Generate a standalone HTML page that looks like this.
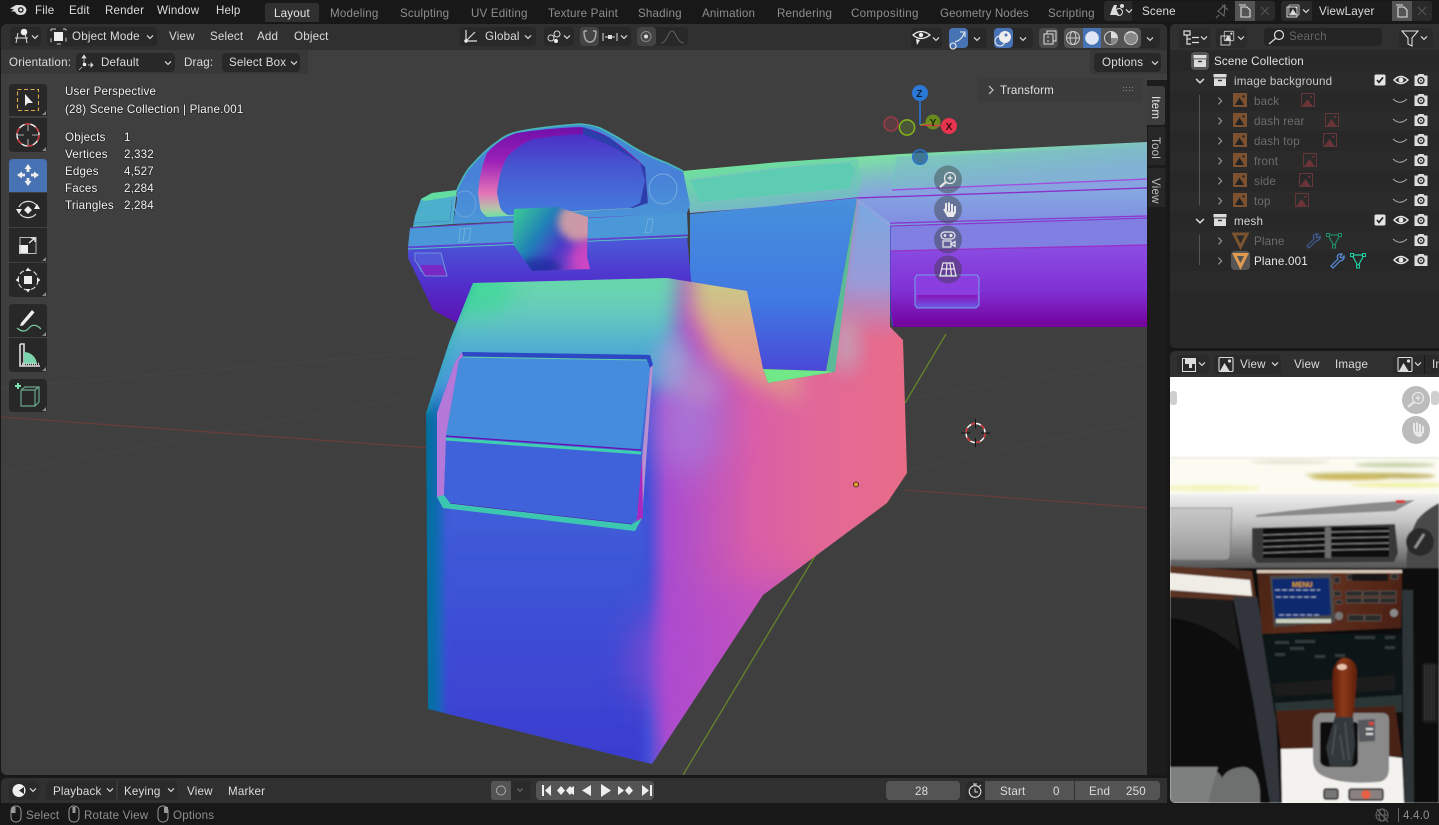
<!DOCTYPE html>
<html lang="en"><head><meta charset="utf-8"><title>Blender</title>
<style>
html,body{margin:0;padding:0;background:#181818;overflow:hidden}
svg{display:block;width:1439px;height:825px}
text{font-family:"Liberation Sans",sans-serif;font-size:11.6px;fill:#dcdcdc;letter-spacing:.18px;white-space:pre}
.tab{fill:#8e8e8e}
.s{fill:#f2f2f2;stroke:#1a1a1a;stroke-opacity:.55;stroke-width:1.6px;paint-order:stroke}
.dim{fill:#6d6d6d}
.st{fill:#8f8f8f}
.b{fill:#2a2a2a}
</style></head><body>
<svg viewBox="0 0 1439 825" width="1439" height="825">
<defs>
<clipPath id="vp"><rect x="1" y="24" width="1166" height="751" rx="6"/></clipPath>
<clipPath id="vm"><rect x="0" y="24" width="1147" height="751"/></clipPath>
<clipPath id="con"><path d="M473 283L667 278 747 291 763 369 768 383 835 372 857 198 890 222 890 327 903 340 907 473 887 503 763 595 652 764 428 709 426 413 450 340Z"/></clipPath>
<clipPath id="cub"><path d="M514 209L558 207 588 217 587 257 590 269 532 271 513 244Z"/></clipPath>
<clipPath id="img"><path d="M1170 377H1439V803H1176Q1170 803 1170 797Z"/></clipPath>
<filter id="b4" x="-40%" y="-40%" width="180%" height="180%"><feGaussianBlur stdDeviation="4"/></filter>
<filter id="b10" x="-50%" y="-50%" width="200%" height="200%"><feGaussianBlur stdDeviation="10"/></filter>
<filter id="b18" x="-80%" y="-80%" width="260%" height="260%"><feGaussianBlur stdDeviation="18"/></filter>
<filter id="p" x="-10%" y="-10%" width="120%" height="120%"><feGaussianBlur stdDeviation=".9"/></filter>
<filter id="p3" x="-30%" y="-30%" width="160%" height="160%"><feGaussianBlur stdDeviation="1.500"/></filter>

<linearGradient id="cbase" gradientUnits="userSpaceOnUse" x1="426" y1="0" x2="907" y2="0">
<stop offset="0" stop-color="#00709c"/><stop offset=".03" stop-color="#1668b8"/><stop offset=".055" stop-color="#3a52d6"/><stop offset=".46" stop-color="#4250d8"/><stop offset=".5" stop-color="#a84cd0"/><stop offset=".68" stop-color="#d85ea8"/><stop offset=".82" stop-color="#e26898"/><stop offset="1" stop-color="#e86c88"/></linearGradient>
<linearGradient id="cbot" gradientUnits="userSpaceOnUse" x1="0" y1="520" x2="0" y2="764"><stop offset="0" stop-color="#3f5cd8"/><stop offset="1" stop-color="#3a3cd0"/></linearGradient>
<linearGradient id="cup" gradientUnits="userSpaceOnUse" x1="0" y1="282" x2="0" y2="420"><stop offset="0" stop-color="#68d8aa"/><stop offset=".25" stop-color="#66c8c0"/><stop offset=".5" stop-color="#4cabd2"/><stop offset="1" stop-color="#4282dc"/></linearGradient>
<linearGradient id="cupr" gradientUnits="userSpaceOnUse" x1="0" y1="280" x2="0" y2="400"><stop offset="0" stop-color="#c8cc88"/><stop offset=".45" stop-color="#e0a488"/><stop offset="1" stop-color="#e08a90"/></linearGradient>
<linearGradient id="band" gradientUnits="userSpaceOnUse" x1="905" y1="148" x2="910" y2="192"><stop offset="0" stop-color="#7ce89a"/><stop offset=".55" stop-color="#7fc0c4"/><stop offset="1" stop-color="#88a4e0"/></linearGradient>
<linearGradient id="band2" gradientUnits="userSpaceOnUse" x1="1000" y1="190" x2="1000" y2="250"><stop offset="0" stop-color="#84a8e0"/><stop offset="1" stop-color="#8078e4"/></linearGradient>
<linearGradient id="lower" gradientUnits="userSpaceOnUse" x1="0" y1="248" x2="0" y2="327"><stop offset="0" stop-color="#8a4ce2"/><stop offset=".55" stop-color="#8030d4"/><stop offset="1" stop-color="#74009a"/></linearGradient>
<linearGradient id="rec" gradientUnits="userSpaceOnUse" x1="0" y1="200" x2="0" y2="372"><stop offset="0" stop-color="#4690dc"/><stop offset=".6" stop-color="#4078e2"/><stop offset="1" stop-color="#4a48d6"/></linearGradient>
<linearGradient id="hood" gradientUnits="userSpaceOnUse" x1="0" y1="125" x2="0" y2="225"><stop offset="0" stop-color="#3f8ed4"/><stop offset=".5" stop-color="#4880d8"/><stop offset="1" stop-color="#4a98d8"/></linearGradient>
<linearGradient id="rim" gradientUnits="userSpaceOnUse" x1="0" y1="130" x2="0" y2="218"><stop offset="0" stop-color="#7410aa"/><stop offset=".35" stop-color="#9a20b8"/><stop offset=".72" stop-color="#e474b8"/><stop offset=".9" stop-color="#b0c8a8"/><stop offset="1" stop-color="#64e4a0"/></linearGradient>
<linearGradient id="inn" gradientUnits="userSpaceOnUse" x1="0" y1="135" x2="0" y2="210"><stop offset="0" stop-color="#4c30c6"/><stop offset=".45" stop-color="#4658d0"/><stop offset="1" stop-color="#4478dc"/></linearGradient>
<linearGradient id="low2" gradientUnits="userSpaceOnUse" x1="0" y1="240" x2="0" y2="325"><stop offset="0" stop-color="#4a58d8"/><stop offset=".5" stop-color="#5030cc"/><stop offset="1" stop-color="#5e10b0"/></linearGradient>
<linearGradient id="cube" gradientUnits="userSpaceOnUse" x1="514" y1="215" x2="588" y2="265"><stop offset="0" stop-color="#38c498"/><stop offset=".35" stop-color="#2080b8"/><stop offset=".62" stop-color="#4a3cc8"/><stop offset="1" stop-color="#c040c8"/></linearGradient>
<linearGradient id="tr" gradientUnits="userSpaceOnUse" x1="0" y1="205" x2="0" y2="335"><stop offset="0" stop-color="#7aa8e0"/><stop offset=".6" stop-color="#9a9ad8"/><stop offset="1" stop-color="#e26c92"/></linearGradient>
<linearGradient id="hand" gradientUnits="userSpaceOnUse" x1="0" y1="295" x2="0" y2="308"><stop offset="0" stop-color="#8a14b8"/><stop offset="1" stop-color="#6a5ae6"/></linearGradient>
<linearGradient id="gdash" gradientUnits="userSpaceOnUse" x1="0" y1="490" x2="0" y2="568"><stop offset="0" stop-color="#f6f6f6"/><stop offset=".4" stop-color="#c4c4c4"/><stop offset=".8" stop-color="#808080"/><stop offset="1" stop-color="#555"/></linearGradient>
<linearGradient id="wood" gradientUnits="userSpaceOnUse" x1="1260" y1="570" x2="1400" y2="630"><stop offset="0" stop-color="#4a2416"/><stop offset=".5" stop-color="#5e2e1c"/><stop offset="1" stop-color="#4a2014"/></linearGradient>
<linearGradient id="knob" gradientUnits="userSpaceOnUse" x1="1332" y1="0" x2="1358" y2="0"><stop offset="0" stop-color="#5a1c0a"/><stop offset=".45" stop-color="#8c3a18"/><stop offset="1" stop-color="#581c0c"/></linearGradient>

<path id="cd" d="M-3-1.6L0 1.4 3-1.6" fill="none" stroke="#d8d8d8" stroke-width="1.2"/>
<path id="cr" d="M-1.6-3.4L1.6 0-1.6 3.4" fill="none" stroke="#9a9a9a" stroke-width="1.1"/>
<g id="eye"><path d="M-7 0Q0-7 7 0Q0 7-7 0Z" fill="none" stroke="#e6e6e6" stroke-width="1.5"/><circle r="2.4" fill="#e6e6e6"/></g>
<path id="eyec" d="M-7-2Q0 4.5 7-2" fill="none" stroke="#a8a8a8" stroke-width="1"/>
<g id="cam"><path d="M-6.500-4.500H-3.500L-2.500-6H2.500L3.500-4.500H6.500V6H-6.500Z" fill="#dedede"/><circle cy=".5" r="3.700" fill="#333"/><circle cy=".5" r="2.200" fill="#dedede"/><circle cy=".5" r=".9" fill="#333"/></g>
<g id="chk"><rect x="-5.5" y="-5.5" width="11" height="11" rx="1.5" fill="#e4e4e4"/><path d="M-3 0L-1 2.4 3-2.6" fill="none" stroke="#222" stroke-width="1.7"/></g>
<g id="coll"><rect x="-6.5" y="-6" width="13" height="3.4" fill="#dcdcdc"/><path d="M-6-1.6H6V6H-6Z" fill="#dcdcdc"/><rect x="-2" y="-.2" width="4" height="1.4" fill="#333"/></g>
<g id="imgb"><rect x="-7" y="-7" width="14" height="14" fill="#7e5230"/><path d="M-5 5L-.5-2.5 4 5Z" fill="#222"/><circle cx="3.5" cy="-3.5" r="1.2" fill="#222"/></g>
<g id="imgr"><rect x="-6.5" y="-6.5" width="13" height="13" fill="none" stroke="#653638" stroke-width="1"/><path d="M-5.5 6L-.5-1 4.5 6Z" fill="#6c3438"/><circle cx="3.2" cy="-3.2" r="1.2" fill="#6c3438"/></g>
<g id="ic"><rect x="-7" y="-7" width="14" height="14" rx="1" fill="none" stroke="#dcdcdc" stroke-width="1.1"/><path d="M-6 6.5L-1.5-1.5 3.5 6.5Z" fill="#dcdcdc"/><circle cx="3.5" cy="-3.5" r="1.6" fill="#dcdcdc"/></g>
<g id="ms"><rect x="-5" y="-8" width="10" height="16" rx="4.5" fill="none" stroke="#9a9a9a" stroke-width="1"/></g>
</defs>

<rect width="1439" height="825" fill="#181818"/>

<!-- top bar -->
<g fill="#dedede"><path d="M10 8.500L16 5H20.500Q25 5 26.500 9.500Q26 15 20.500 15Q16 15 15 11.500L11 11.500 14 9.500Z"/></g><circle cx="20.800" cy="9.900" r="2.800" fill="#181818"/><circle cx="20.800" cy="9.900" r="1.500" fill="#dedede"/>
<text x="35" y="14">File</text><text x="69" y="14">Edit</text><text x="105" y="14">Render</text><text x="157" y="14">Window</text><text x="216" y="14">Help</text>
<path d="M265 22V6Q265 3 268 3H316Q319 3 319 6V22Z" fill="#303030"/>
<text x="274" y="17" style="fill:#e6e6e6">Layout</text>
<text class="tab" x="330" y="17">Modeling</text><text class="tab" x="400" y="17">Sculpting</text><text class="tab" x="471" y="17">UV Editing</text><text class="tab" x="548" y="17">Texture Paint</text><text class="tab" x="638" y="17">Shading</text><text class="tab" x="702" y="17">Animation</text><text class="tab" x="777" y="17">Rendering</text><text class="tab" x="851" y="17" style="letter-spacing:.3px">Compositing</text><text class="tab" x="940" y="17" style="letter-spacing:.08px">Geometry Nodes</text><text class="tab" x="1048" y="17">Scripting</text>

<rect x="1104" y="1" width="171" height="20" rx="3" fill="#2a2a2a"/>
<rect x="1132" y="1" width="103" height="20" fill="#1c1c1c"/><rect x="1235" y="1" width="20" height="20" fill="#545454"/>
<path d="M1114 5L1117 5 1116 9 1119 15H1110L1112 9Z" fill="#dcdcdc"/><circle cx="1119" cy="12" r="3.5" fill="none" stroke="#dcdcdc"/><circle cx="1122" cy="6" r="2" fill="#dcdcdc"/><use href="#cd" x="1129" y="11"/>
<text x="1142" y="15">Scene</text>
<path d="M1222 5L1228 10M1225 5L1218 11 1224 16ZM1219 15L1216 18" stroke="#707070" fill="none"/>
<path d="M1241 7H1247L1250 10V17H1241ZM1239 5H1246" fill="none" stroke="#e0e0e0" stroke-width="1.1"/>
<path d="M1261 7L1269 15M1269 7L1261 15" stroke="#555" stroke-width="1.1"/>
<rect x="1281" y="1" width="151" height="20" rx="3" fill="#2a2a2a"/>
<rect x="1312" y="1" width="80" height="20" fill="#1c1c1c"/><rect x="1392" y="1" width="20" height="20" fill="#545454"/>
<rect x="1287" y="7" width="10" height="10" fill="none" stroke="#dcdcdc"/><use href="#ic" transform="translate(1294 10) scale(.72)"/><use href="#cd" x="1306" y="11"/>
<text x="1319" y="15">ViewLayer</text>
<path d="M1398 7H1404L1407 10V17H1398ZM1396 5H1403" fill="none" stroke="#e0e0e0" stroke-width="1.1"/>
<path d="M1418 7L1426 15M1426 7L1418 15" stroke="#555" stroke-width="1.1"/>

<!-- VIEWPORT -->
<g clip-path="url(#vp)">
<rect x="1" y="24" width="1166" height="751" fill="#3f3f3f"/>
<g stroke="#444" stroke-width="1" fill="none">
<path d="M1 473L420 395M1 388L420 352M900 400L1147 360M905 470L1147 420"/>
</g>
<path d="M1 417L430 448M905 490L1147 508" stroke="#6e3c3c" stroke-width="1.1"/>
<path d="M683 775L815 556M905 403L946 334" stroke="#66852a" stroke-width="1.3"/>

<g clip-path="url(#vm)">
<!-- right dash -->
<path d="M683 171L780 162 900 154 1147 142V192L857 200 690 213Z" fill="url(#band)"/>
<path d="M690 180L780 168 850 163 856 170 850 188 700 202Z" fill="#5cc8bc"/>
<path d="M690 180L780 168 857 161 850 189 696 204" fill="none" stroke="#90b8d0" stroke-width="1"/>
<path d="M683 172L780 162 857 157 862 180 857 200 690 212Z" fill="#60d0a8" opacity=".45"/>
<path d="M898 157Q894 170 893 190L1147 179V146Z" fill="#7cbcc8" opacity=".55"/>
<path d="M898 157Q894 170 893 190L1147 179" fill="none" stroke="#70c8c0" stroke-width="1"/>
<path d="M892 190L1147 179" stroke="#a050e0" stroke-width="1.4"/>
<path d="M857 199L1147 188V218L857 226Z" fill="url(#band2)"/>
<path d="M780 206L857 198 1147 188" fill="none" stroke="#8a30c8" stroke-width="1.4"/>
<path d="M860 224L1147 216" stroke="#8a38d0" stroke-width="1.3"/>
<path d="M860 226L1147 218" stroke="#6ac0c8" stroke-width="1"/>
<path d="M890 226L1147 218V246L890 252Z" fill="#8080e2"/>
<path d="M890 226L1147 218" stroke="#8a38d0" stroke-width="1.3"/>
<path d="M890 251L1147 245V327H893L891 310Z" fill="url(#lower)"/>
<path d="M890 251L1147 245" stroke="#9a30c8" stroke-width="1.3"/>
<path d="M890 226V310L893 326" fill="none" stroke="#3c48c8" stroke-width="1.2"/>
<!-- glovebox -->
<path d="M917 275H977L979 278V305L976 308H917L915 305V278Z" fill="#8a3ee0"/>
<path d="M917 295H977L979 305 976 308H917L915 305Z" fill="url(#hand)"/>
<path d="M917 275H977L979 278V305L976 308H917L915 305V278Z" fill="none" stroke="#78a0e8" stroke-width="1"/>
<!-- recess -->
<path d="M690 214L857 198 826 371 763 369 750 320 690 300Z" fill="url(#rec)"/>
<!-- left lower -->
<path d="M408 246L687 236 692 290 473 290 457 323 433 310 408 258Z" fill="url(#low2)"/>
<path d="M415 253H441L446 271 420 272Z" fill="#5058d8"/><path d="M420 265H442L447 276 425 276Z" fill="#7a28c4"/>
<path d="M415 253H441L447 276 425 276 415 260Z" fill="none" stroke="#7aa0dc" stroke-width=".8"/>
<!-- band left -->
<path d="M410 228L687 212 688 235 408 247Z" fill="#4a98d8"/>
<path d="M410 228L687 212" stroke="#7040c8" stroke-width="1"/>
<path d="M408 247L688 235" stroke="#6a40d0" stroke-width="1.2"/>
<path d="M408 249L688 237" stroke="#58c8c0" stroke-width=".9"/>
<path d="M460 229L471 228 469 241 459 242ZM465 229L463 241M648 219L653 219 651 232 645 233Z" fill="none" stroke="#79b2dc" stroke-width=".8"/>
<!-- hood -->
<path d="M457 190Q465 172 472 165Q485 150 497 142Q507 134 517 132Q540 127 580 124Q592 125 600 128Q618 137 633 147Q650 157 667 163L683 171 690 205 687 213 453 224 457 200Z" fill="url(#hood)"/>
<path d="M457 190Q465 172 472 165Q485 150 497 142Q507 134 517 132Q540 127 580 124Q592 125 600 128Q618 137 633 147Q650 157 667 163L683 171" fill="none" stroke="#48b8b8" stroke-width="1.6"/>
<path d="M421 199L432 193 457 190 456 198 453 224 413 227 415 216Z" fill="#4cb0cc"/>
<path d="M421 199L432 193 457 190 456 196 424 201Z" fill="#62dca0"/>
<path d="M413 223L450 221 452 200" fill="none" stroke="#4a88c8" stroke-width=".8"/>
<path d="M478 193Q480 170 487 153Q500 138 517 133Q550 128 580 127Q597 130 610 138Q630 152 645 167L648 203 633 208 507 216 487 217Q480 212 480 207Z" fill="url(#rim)"/>
<path d="M497 193Q499 172 507 157Q518 145 533 139Q560 135 583 134Q600 138 613 147Q628 155 640 163L645 180 640 203 630 208 508 215Q502 212 500 207Z" fill="url(#inn)"/>
<path d="M583 127L610 138 645 167 648 203 633 208 630 208 640 203 645 180 640 163 613 147 583 134Z" fill="#2c3eac"/>
<ellipse cx="465" cy="204" rx="11" ry="13" fill="none" stroke="#6aa4dc" stroke-width=".9"/>
<ellipse cx="663" cy="189" rx="14" ry="15" fill="none" stroke="#78aee0" stroke-width=".9"/>
<!-- cube -->
<path d="M514 209L558 207 588 217 587 257 590 269 532 271 513 244Z" fill="url(#cube)"/>
<g clip-path="url(#cub)"><ellipse cx="580" cy="222" rx="22" ry="20" fill="#e0a8a0" opacity=".85" filter="url(#b4)"/><ellipse cx="540" cy="268" rx="22" ry="10" fill="#1c2a9c" opacity=".75" filter="url(#b4)"/><ellipse cx="585" cy="258" rx="14" ry="16" fill="#d848c0" opacity=".7" filter="url(#b4)"/></g>
<!-- notch faces -->
<path d="M763 369L826 371 835 372 768 383Z" fill="#70e888"/>
<path d="M857 198L860 200 836 372 826 371Z" fill="#60d0a8" opacity=".85"/>
<!-- console -->
<g clip-path="url(#con)">
<rect x="420" y="190" width="500" height="580" fill="url(#cbase)"/>
<rect x="444" y="500" width="200" height="270" fill="url(#cbot)" filter="url(#b4)"/>
<ellipse cx="770" cy="660" rx="140" ry="80" fill="#b048d0" opacity=".55" filter="url(#b18)"/>
<ellipse cx="688" cy="420" rx="32" ry="55" fill="#a878d8" opacity=".85" filter="url(#b18)"/>
<path d="M400 240H682L672 385 400 405Z" fill="url(#cup)" filter="url(#b10)"/>
<ellipse cx="475" cy="292" rx="38" ry="24" fill="#30d890" opacity=".6" filter="url(#b10)"/>
<path d="M426 413L450 340 473 283 462 283 420 410Z" fill="#22b0a8" opacity=".7" filter="url(#b4)"/>
<path d="M690 235H800V405L760 388 715 360 692 310Z" fill="url(#cupr)" filter="url(#b10)"/>
<ellipse cx="674" cy="365" rx="18" ry="28" fill="#a0a4d6" opacity=".85" filter="url(#b10)"/>
<ellipse cx="700" cy="385" rx="18" ry="20" fill="#b890c8" opacity=".7" filter="url(#b10)"/>
<path d="M857 190H896V338H835Z" fill="url(#tr)" filter="url(#b4)"/>
<ellipse cx="846" cy="345" rx="12" ry="28" fill="#b8b0c0" opacity=".8" filter="url(#b10)"/>
<path d="M857 200L890 226" fill="none" stroke="#a0a0e8" stroke-width="1"/>
</g>
<!-- front panel -->
<path d="M462 352L650 355 653 365 642 518 635 531 443 508 437 497 437 413 455 362Z" fill="#4268d8"/>
<path d="M462 352L650 355 653 365 650 368 463 357Z" fill="#2c48c4"/>
<path d="M437 413L455 362 462 352 463 357 459 360 446 436 444 495 437 497Z" fill="#b478d8"/>
<path d="M653 365L642 518 637 517 650 368Z" fill="#b890d0"/>
<path d="M642 455L643 518 636 524 637 517Z" fill="#a828c0"/>
<path d="M437 497L443 508 635 531 642 518 632 524 450 503 444 495Z" fill="#3cc8b0"/>
<path d="M450 503L632 524" stroke="#5014a0" stroke-width="1.1"/>
<path d="M463 357L647 360 650 368 640 450 446 436 459 360Z" fill="#458ddc"/>
<path d="M463 357L647 360" stroke="#62d0a8" stroke-width="1"/>
<path d="M446 441L642 455 637 517 632 524 450 503 444 495Z" fill="#3f62da"/>
<path d="M446 436L641 450" stroke="#6a10b0" stroke-width="1.3"/>
<path d="M446 439L641 453" stroke="#40d0b0" stroke-width="3"/>
</g>
<!-- header strips -->
<rect x="1" y="24" width="1166" height="26" fill="#303030"/>
<path d="M1 50H308V70Q308 74 304 74H1Z" fill="#383838"/>
<path d="M1167 50H1090V70Q1090 74 1094 74H1167Z" fill="#383838"/>

<!-- N panel -->
<rect x="1147" y="80" width="20" height="695" fill="#1c1c1c"/>
<path d="M1147 86H1162Q1165 86 1165 89V122Q1165 125 1162 125H1147Z" fill="#3d3d3d"/>
<path d="M1148 127H1165V165H1148ZM1148 168H1165V207H1148Z" fill="#272727"/>
<text transform="translate(1152 96) rotate(90)" style="fill:#e8e8e8">Item</text>
<text transform="translate(1152 137) rotate(90)" style="fill:#c0c0c0">Tool</text>
<text transform="translate(1152 178) rotate(90)" style="fill:#c0c0c0">View</text>
<rect x="978" y="78" width="164" height="24" rx="4" fill="#3b3b3b"/>
<path d="M989 86L993 90 989 94" fill="none" stroke="#d0d0d0" stroke-width="1.1"/>
<text x="1000" y="94" style="fill:#e0e0e0">Transform</text>
<g fill="#888"><rect x="1123" y="87" width="1" height="1"/><rect x="1126" y="87" width="1" height="1"/><rect x="1129" y="87" width="1" height="1"/><rect x="1132" y="87" width="1" height="1"/><rect x="1123" y="90" width="1" height="1"/><rect x="1126" y="90" width="1" height="1"/><rect x="1129" y="90" width="1" height="1"/><rect x="1132" y="90" width="1" height="1"/></g>

<!-- 3D cursor / origin -->
<circle cx="975.5" cy="433" r="9.5" fill="none" stroke="#fff" stroke-width="1.4"/>
<circle cx="975.5" cy="433" r="9.5" fill="none" stroke="#d82a2a" stroke-width="1.4" stroke-dasharray="5 5"/>
<path d="M975.5 419V428M975.5 438V447M961 433H970M981 433H990" stroke="#111" stroke-width="1"/>
<circle cx="856" cy="484.5" r="2.5" fill="#f09a20" stroke="#222" stroke-width=".8"/>

<!-- nav gizmo -->
<circle cx="891" cy="124" r="7" fill="#7a3a42" fill-opacity=".45" stroke="#a83a48" stroke-width="1.3"/>
<circle cx="920" cy="157" r="7.4" fill="#2a5a8c" fill-opacity=".75" stroke="#2a76d4" stroke-width="1.3"/>
<circle cx="933" cy="122" r="7.5" fill="#6a8a20"/>
<path d="M920 93V125" stroke="#2a76d4" stroke-width="1.6"/>
<path d="M920 125L949 126" stroke="#d83a50" stroke-width="1.6"/>
<path d="M920 125L932 122" stroke="#7a9a20" stroke-width="1.4"/>
<circle cx="907" cy="127.5" r="7.6" fill="#5a7030" fill-opacity=".45" stroke="#8ab818" stroke-width="1.5"/>
<circle cx="949" cy="126" r="8" fill="#e8344e"/>
<circle cx="920" cy="93" r="8" fill="#2a78d8"/>
<text x="916.2" y="97" style="font-size:10px;font-weight:bold;fill:#0c2038;letter-spacing:0">Z</text>
<text x="945.6" y="130" style="font-size:10px;font-weight:bold;fill:#3a0a10;letter-spacing:0">X</text>
<text x="929.8" y="126" style="font-size:10px;font-weight:bold;fill:#1c2806;letter-spacing:0">Y</text>
<g fill="#3a3a3a" fill-opacity=".42"><circle cx="948" cy="179.5" r="14"/><circle cx="948" cy="209.5" r="14"/><circle cx="948" cy="239.5" r="14"/><circle cx="948" cy="269.5" r="14"/></g>
<g fill="none" stroke="#e8e8e8" stroke-width="1.2">
<circle cx="950" cy="178" r="5.5"/><path d="M946 182L940 187" stroke-width="2.2"/><path d="M947.5 178H952.5M950 175.5V180.5"/>
<path d="M952 204V212M949 202.5V211M946 203V211M955 206V213M944 209L948 216H953L955 212" stroke-width="2" /><path d="M945 211Q947 217 952 217Q955 216 955 212" fill="#e8e8e8" stroke="none"/>
<rect x="941" y="232" width="14" height="7" rx="3.5"/><circle cx="945" cy="235.500" r=".8" fill="#e8e8e8"/><circle cx="951" cy="235.500" r="1" fill="#e8e8e8"/><rect x="943" y="241" width="8" height="6"/><path d="M951 244L955 241.5V246.5Z"/>
<path d="M943 263H953L956 276H940ZM941.6 269H954.4M947 263L946 276M950 263L951.5 276"/>
</g>

<!-- toolbar -->
<g fill="#282828">
<path d="M13 84H43Q47 84 47 88V116H9V88Q9 84 13 84ZM9 118H47V148Q47 152 43 152H13Q9 152 9 148Z"/>
<path d="M13 159H43Q47 159 47 163V192H9V163Q9 159 13 159Z" fill="#4772b3"/>
<path d="M9 193H47V227H9ZM9 228H47V262H9ZM9 263H47V293Q47 297 43 297H13Q9 297 9 293Z"/>
<path d="M13 304H43Q47 304 47 308V337H9V308Q9 304 13 304ZM9 338H47V368Q47 372 43 372H13Q9 372 9 368Z"/>
<rect x="9" y="379" width="38" height="33" rx="4"/>
</g>
<rect x="17.5" y="89.5" width="21" height="21" fill="none" stroke="#e0a84a" stroke-width="1.1" stroke-dasharray="4 2.5"/>
<path d="M25 94V106L28 103 33 103Z" fill="#eee"/>
<circle cx="28" cy="135" r="11" fill="none" stroke="#eee" stroke-width="1.4"/><circle cx="28" cy="135" r="11" fill="none" stroke="#c83030" stroke-width="1.4" stroke-dasharray="6 6"/>
<path d="M28 125V131M28 139V145M18 135H24M32 135H38" stroke="#aaa" stroke-width="1.1"/>
<g fill="#eee"><path d="M28 164L31.5 169H24.5ZM28 186L24.5 181H31.5ZM17 175L22 171.5V178.5ZM39 175L34 171.5V178.5Z"/><path d="M26.6 169H29.4V172H26.6ZM26.6 178H29.4V181H26.6ZM22 173.6H25V176.4H22ZM31 173.6H34V176.4H31Z"/></g>
<path d="M19 207A10 9 0 0 1 37 206M36 214A10 9 0 0 1 20 214" fill="none" stroke="#ddd" stroke-width="1.2"/><path d="M24 210L28 206 32 210 28 214Z" fill="#eee"/><path d="M16 209H22L19 214ZM34 209H40L37 204Z" fill="#eee"/>
<rect x="19" y="245" width="9" height="9" fill="#eee"/><rect x="20" y="237.500" width="16" height="16" fill="none" stroke="#bbb"/><path d="M29 243L35 238M35 238H31M35 238V242" stroke="#eee" stroke-width="1.3" fill="none"/>
<circle cx="28" cy="280" r="10" fill="none" stroke="#ddd" stroke-width="1.1" stroke-dasharray="5 2.5"/><rect x="24" y="276" width="8" height="8" fill="#eee"/><path d="M28 267.500L25.500 271H30.500ZM28 292.500L25.500 289H30.500ZM15.500 280L19 277.500V282.500ZM40.500 280L37 277.500V282.500Z" fill="#eee"/>
<path d="M21 323L32 310 34.500 312.500 23 325.500 20 326Z" fill="#eee"/><path d="M17 328Q24 334 29 328T41 329" fill="none" stroke="#7bc8a0" stroke-width="1.3"/>
<path d="M20 344V366H40M20 344H24V366" fill="none" stroke="#ddd" stroke-width="1.6"/><path d="M24 352A13 13 0 0 1 37 364H24Z" fill="#7bd4ac"/><path d="M20 364H40" stroke="#ccc" stroke-width="2.4" stroke-dasharray="1 1"/>
<path d="M15 386H21M18 383V389" stroke="#7be0b0" stroke-width="2"/>
<path d="M21 390H35L39 387M21 390V406H35V390M35 406L39 402V387H25L21 390" fill="none" stroke="#6ca88c" stroke-width="1.2"/>
<g fill="#888"><path d="M46 115V111L42 115ZM46 151V147L42 151ZM46 261V257L42 261ZM46 296V292L42 296ZM46 336V332L42 336ZM46 371V367L42 371ZM46 411V407L42 411Z"/></g>

<!-- stats -->
<text class="s" x="65" y="95">User Perspective</text>
<text class="s" x="65" y="113">(28) Scene Collection | Plane.001</text>
<text class="s" x="65" y="141">Objects</text><text class="s" x="124" y="141">1</text>
<text class="s" x="65" y="158">Vertices</text><text class="s" x="124" y="158">2,332</text>
<text class="s" x="65" y="175">Edges</text><text class="s" x="124" y="175">4,527</text>
<text class="s" x="65" y="192">Faces</text><text class="s" x="124" y="192">2,284</text>
<text class="s" x="65" y="209">Triangles</text><text class="s" x="124" y="209">2,284</text>

<!-- header widgets -->
<g fill="#282828">
<rect x="10" y="27" width="31" height="19" rx="4"/><rect x="47" y="27" width="110" height="19" rx="4"/>
<rect x="460" y="27" width="76" height="19" rx="4"/><rect x="544" y="27" width="30" height="19" rx="4"/>
<rect x="580" y="27" width="51" height="19" rx="4"/><rect x="637" y="27" width="51" height="19" rx="4"/>
<rect x="911" y="28" width="31" height="20" rx="4"/><rect x="949" y="28" width="38" height="20" rx="4"/>
<rect x="994" y="28" width="39" height="20" rx="4"/><rect x="1064" y="28" width="96" height="20" rx="4"/>
<rect x="76" y="53" width="99" height="19" rx="4"/><rect x="222" y="53" width="78" height="19" rx="4"/><rect x="1094" y="53" width="67" height="19" rx="4"/>
</g>
<rect x="580" y="27" width="19" height="19" rx="4" fill="#444"/><rect x="637" y="27" width="19" height="19" rx="4" fill="#444"/>
<rect x="949" y="28" width="19" height="20" rx="4" fill="#4772b3"/><rect x="994" y="28" width="19" height="20" rx="4" fill="#4772b3"/>
<rect x="1039" y="28" width="19" height="20" rx="4" fill="#4a4a4a"/>
<rect x="1064" y="28" width="77" height="20" rx="4" fill="#545454"/><rect x="1083" y="28" width="18" height="20" fill="#4772b3"/>

<path d="M15 38H28M18 33L16 43M25 33L27 43" stroke="#ddd" fill="none"/><circle cx="24" cy="32" r="3.3" fill="#eee"/><use href="#cd" x="35" y="37"/>
<rect x="51" y="29" width="15" height="15" rx="1" fill="none" stroke="#ccc" stroke-dasharray="4 7"/><rect x="54" y="32" width="9" height="9" fill="#eee"/>
<text x="72" y="40">Object Mode</text><use href="#cd" x="150" y="37"/>
<text x="169" y="40">View</text><text x="210" y="40">Select</text><text x="257" y="40">Add</text><text x="294" y="40">Object</text>
<path d="M466 30V41H477M466 41L475 32" fill="none" stroke="#ddd" stroke-width="1.2"/><circle cx="466" cy="41" r="1.7" fill="#eee"/>
<text x="485" y="40">Global</text><use href="#cd" x="528" y="37"/>
<circle cx="551" cy="38" r="3" fill="none" stroke="#ddd"/><circle cx="557" cy="34" r="3" fill="none" stroke="#ddd"/><circle cx="556" cy="41" r="2" fill="#eee"/><use href="#cd" x="567" y="37"/>
<path d="M584 31Q584 42 590 42Q596 42 596 31M584 31H587M593 31H596" fill="none" stroke="#aaa" stroke-width="1.5"/>
<path d="M603 33V41M617 33V41M605 37H615" stroke="#ddd" fill="none"/><path d="M608 35H612V39H608Z" fill="#ddd"/><use href="#cd" x="624" y="37"/>
<circle cx="646" cy="36.500" r="5" fill="none" stroke="#888"/><circle cx="646" cy="36.500" r="2" fill="#ddd"/>
<path d="M661 43C667 43 668 31 672 31S677 43 684 43" fill="none" stroke="#5e5e5e"/>
<path d="M913 35Q921 28 930 35Q921 42 913 35Z" fill="none" stroke="#eee" stroke-width="1.3"/><circle cx="921" cy="35" r="2.2" fill="#eee"/><path d="M916 39L920 40 917 45Z" fill="#eee"/><use href="#cd" x="936" y="39"/>
<path d="M953 43A3 3 0 1 0 953.100 43M955 42Q962 40 964 33M960 32H965V37" fill="none" stroke="#eee" stroke-width="1.1"/><use href="#cd" x="977" y="39"/>
<circle cx="1005" cy="37" r="6" fill="#eee"/><circle cx="1000" cy="41" r="5" fill="none" stroke="#eee"/><circle cx="1006" cy="35" r="1.500" fill="#4772b3"/><use href="#cd" x="1023" y="39"/>
<path d="M1044 34V44H1053V34ZM1047 34V31H1056V41H1053" fill="none" stroke="#ddd" stroke-width="1"/><path d="M1047 37H1049M1047 41H1049" stroke="#ddd"/>
<g fill="none" stroke="#ccc"><circle cx="1073" cy="38" r="6.500"/><ellipse cx="1073" cy="38" rx="3" ry="6.500"/><path d="M1066.500 38H1079.500"/></g>
<circle cx="1092" cy="38" r="6.800" fill="#dfe7f6"/>
<circle cx="1111" cy="38" r="6.500" fill="none" stroke="#ccc"/><path d="M1111 31.500A6.500 6.500 0 0 1 1111 44.500Z" fill="#888"/><path d="M1111 31.500A6.500 6.500 0 0 1 1117.500 38H1111Z" fill="#ddd"/>
<circle cx="1131" cy="38" r="6.500" fill="#888" stroke="#ccc"/><path d="M1127 34A5 5 0 0 1 1135 34" fill="none" stroke="#ddd"/><use href="#cd" x="1150" y="39"/>

<text x="9" y="66">Orientation:</text>
<path d="M84 58V63M84 55L82 58H86ZM79 70L82 67M88 65H93M93 65L91 63V67Z" fill="#ddd" stroke="#ddd" stroke-width=".7"/><circle cx="84.500" cy="64.500" r="1.800" fill="#eee"/>
<text x="101" y="66">Default</text><use href="#cd" x="168" y="63"/>
<text x="184" y="66">Drag:</text>
<text x="229" y="66">Select Box</text><use href="#cd" x="294" y="63"/>
<text x="1102" y="66">Options</text><use href="#cd" x="1155" y="63"/>
</g>

<!-- Outliner -->
<path d="M1176 24H1439V348H1176Q1170 348 1170 342V30Q1170 24 1176 24Z" fill="#282828"/>
<path d="M1176 24H1439V50H1170V30Q1170 24 1176 24Z" fill="#303030"/>
<g fill="#2b2b2b"><rect x="1170" y="71" width="269" height="20"/><rect x="1170" y="111" width="269" height="20"/><rect x="1170" y="151" width="269" height="20"/><rect x="1170" y="191" width="269" height="20"/><rect x="1170" y="231" width="269" height="20"/><rect x="1170" y="271" width="269" height="20"/></g>
<rect x="1179" y="28" width="31" height="20" rx="4" class="b"/><rect x="1216" y="28" width="31" height="20" rx="4" class="b"/>
<rect x="1264" y="28" width="118" height="18" rx="4" fill="#242424"/><rect x="1399" y="28" width="34" height="20" rx="4" class="b"/>
<path d="M1184 31H1190V35H1184ZM1187 35V44H1191M1187 39H1191M1192 37.500H1199M1192 42.500H1199" fill="none" stroke="#ddd" stroke-width="1.2"/><use href="#cd" x="1204" y="38"/>
<rect x="1221" y="36" width="9" height="9" fill="none" stroke="#ccc"/><use href="#ic" transform="translate(1229 36) scale(.68)"/><use href="#cd" x="1241" y="38"/>
<circle cx="1279" cy="35" r="4.500" fill="none" stroke="#ddd" stroke-width="1.2"/><path d="M1275.500 38.500L1269 44" stroke="#ddd" stroke-width="1.2"/>
<text x="1289" y="40" style="fill:#666">Search</text>
<path d="M1402 31H1418L1412 38V46L1408 44V38Z" fill="none" stroke="#ddd" stroke-width="1.1"/><use href="#cd" x="1424" y="38"/>
<rect x="1191" y="52" width="18" height="18" rx="4" fill="#555"/>
<use href="#coll" x="1200" y="61"/>
<text x="1214" y="65" style="fill:#e2e2e2">Scene Collection</text>
<use href="#cd" transform="translate(1200 81) scale(1.3)"/><use href="#coll" x="1220" y="80"/><text x="1234" y="85" style="fill:#c8c8c8">image background</text>
<use href="#chk" x="1380" y="80"/><use href="#eye" x="1401" y="80"/><use href="#cam" x="1421" y="80"/>
<path d="M1199.500 95V205M1199.500 235V265" stroke="#555" stroke-width="1"/>
<use href="#cr" x="1220" y="101"/><use href="#imgb" x="1240" y="100"/><text class="dim" x="1254" y="105">back</text><use href="#imgr" x="1308" y="100"/><use href="#eyec" x="1400" y="101"/><use href="#cam" x="1421" y="100"/>
<use href="#cr" x="1220" y="121"/><use href="#imgb" x="1240" y="120"/><text class="dim" x="1254" y="125">dash rear</text><use href="#imgr" x="1332" y="120"/><use href="#eyec" x="1400" y="121"/><use href="#cam" x="1421" y="120"/>
<use href="#cr" x="1220" y="141"/><use href="#imgb" x="1240" y="140"/><text class="dim" x="1254" y="145">dash top</text><use href="#imgr" x="1330" y="140"/><use href="#eyec" x="1400" y="141"/><use href="#cam" x="1421" y="140"/>
<use href="#cr" x="1220" y="161"/><use href="#imgb" x="1240" y="160"/><text class="dim" x="1254" y="165">front</text><use href="#imgr" x="1310" y="160"/><use href="#eyec" x="1400" y="161"/><use href="#cam" x="1421" y="160"/>
<use href="#cr" x="1220" y="181"/><use href="#imgb" x="1240" y="180"/><text class="dim" x="1254" y="185">side</text><use href="#imgr" x="1306" y="180"/><use href="#eyec" x="1400" y="181"/><use href="#cam" x="1421" y="180"/>
<use href="#cr" x="1220" y="201"/><use href="#imgb" x="1240" y="200"/><text class="dim" x="1254" y="205">top</text><use href="#imgr" x="1302" y="200"/><use href="#eyec" x="1400" y="201"/><use href="#cam" x="1421" y="200"/>
<use href="#cd" transform="translate(1200 221) scale(1.3)"/><use href="#coll" x="1220" y="220"/><text x="1234" y="225" style="fill:#d4d4d4">mesh</text>
<use href="#chk" x="1380" y="220"/><use href="#eye" x="1401" y="220"/><use href="#cam" x="1421" y="220"/>
<use href="#cr" x="1220" y="241"/><path d="M1234 234H1247L1240.500 247Z" fill="none" stroke="#7a5430" stroke-width="3"/><text class="dim" x="1254" y="245">Plane</text>
<path d="M1307 246L1314 239Q1312 235 1316 234L1318 234 1316 237 1318 238 1320 236Q1321 240 1316 241L1309 248Z" fill="none" stroke="#3f5c94" stroke-width="1.2"/>
<path d="M1328 235H1340L1334 246Z" fill="none" stroke="#1f8c6c" stroke-width="1.2"/><g fill="#282828" stroke="#1f8c6c"><rect x="1326.500" y="233.500" width="3" height="3"/><rect x="1338.500" y="233.500" width="3" height="3"/><rect x="1332.500" y="245" width="3" height="3"/></g>
<use href="#eyec" x="1400" y="241"/><use href="#cam" x="1421" y="240"/>
<use href="#cr" x="1220" y="261"/><rect x="1231" y="251" width="19" height="19" rx="4" fill="#555"/><path d="M1234.500 254.500H1246.500L1240.500 266.500Z" fill="none" stroke="#e09a50" stroke-width="3"/><text x="1254" y="265" style="fill:#e8e8e8">Plane.001</text>
<path d="M1331 266L1338 259Q1336 255 1340 254L1342 254 1340 257 1342 258 1344 256Q1345 260 1340 261L1333 268Z" fill="none" stroke="#5b8fe0" stroke-width="1.2"/>
<path d="M1352 255H1364L1358 266Z" fill="none" stroke="#20d0a0" stroke-width="1.2"/><g fill="#282828" stroke="#20d0a0"><rect x="1350.500" y="253.500" width="3" height="3"/><rect x="1362.500" y="253.500" width="3" height="3"/><rect x="1356.500" y="265" width="3" height="3"/></g>
<use href="#eye" x="1401" y="260"/><use href="#cam" x="1421" y="260"/>

<!-- image editor -->
<path d="M1176 351H1439V377H1170V357Q1170 351 1176 351Z" fill="#303030"/>
<g class="b"><rect x="1177" y="355" width="32" height="19" rx="4" fill="#2a2a2a"/><rect x="1214" y="355" width="67" height="19" rx="4" fill="#2a2a2a"/><rect x="1393" y="355" width="46" height="19" rx="4" fill="#2a2a2a"/></g>
<rect x="1182.500" y="358.500" width="13" height="13" fill="none" stroke="#ddd"/><path d="M1185 359H1195V364H1192V368H1189V364H1185Z" fill="#ddd"/><use href="#cd" x="1202" y="364"/>
<use href="#ic" x="1226" y="364.500"/><text x="1240" y="368">View</text><use href="#cd" x="1275" y="364"/>
<text x="1294" y="368">View</text><text x="1335" y="368">Image</text>
<use href="#ic" x="1405" y="364.500"/><use href="#cd" x="1418" y="364"/><text x="1432" y="368">Im</text>
<rect x="1424" y="355" width="1" height="19" fill="#181818"/>

<g clip-path="url(#img)">
<rect x="1170" y="377" width="269" height="426" fill="#fff"/>
<g filter="url(#p)">
<rect x="1170" y="457" width="269" height="40" fill="#fbfbf2"/>
<rect x="1170" y="457" width="269" height="2" fill="#eeeee4"/>
<g filter="url(#p3)"><ellipse cx="1365" cy="475" rx="60" ry="2.500" fill="#c4c070"/><ellipse cx="1350" cy="478" rx="40" ry="2" fill="#d0b450"/><ellipse cx="1405" cy="476" rx="30" ry="2.500" fill="#c0b060"/><ellipse cx="1290" cy="462" rx="40" ry="1.500" fill="#dcdcc4"/><ellipse cx="1395" cy="465" rx="40" ry="2.500" fill="#c8d0a8"/><ellipse cx="1210" cy="488" rx="50" ry="3" fill="#f4f4bc"/><ellipse cx="1400" cy="485" rx="50" ry="2" fill="#f0f09c"/></g>
<path d="M1170 494H1439V570H1170Z" fill="url(#gdash)"/>
<path d="M1170 508H1232L1230 555Q1230 560 1225 560H1170Z" fill="#b8b8b8" fill-opacity=".55"/>
<path d="M1170 508H1232L1230 555Q1230 560 1225 560H1170" fill="none" stroke="#666" stroke-width=".6"/>
<path d="M1256 515Q1330 505 1415 500L1395 511Q1330 514 1256 517Z" fill="#8a8a8a"/>
<rect x="1396" y="500" width="9" height="3" fill="#d83030"/>
<path d="M1252 528L1395 524 1398 553 1394 562 1257 563 1252 556Z" fill="#383838"/>
<rect x="1263" y="528" width="62" height="30" fill="#0c0c0c"/><rect x="1331" y="527" width="58" height="30" fill="#0c0c0c"/>
<path d="M1263 535L1325 533M1263 541L1325 539M1263 547L1325 545M1263 553L1325 551M1331 532L1389 531M1331 538L1389 537M1331 544L1389 543M1331 550L1389 549" stroke="#8a8a8a" stroke-width=".9"/>
<rect x="1325" y="527" width="6" height="31" fill="#6a6a6a"/>
<path d="M1407 570Q1404 545 1417 520Q1425 510 1439 503V570Z" fill="#4a4a4a"/>
<circle cx="1420" cy="542" r="14" fill="#2a2a2a"/><path d="M1415 548L1424 534" stroke="#999" stroke-width="2.500"/>
<!-- lower -->
<rect x="1170" y="568" width="269" height="235" fill="#090909"/>
<path d="M1170 566L1252 571 1256 600H1170Z" fill="#5a3020"/>
<path d="M1170 573L1250 580 1252 596 1170 590Z" fill="#f0ece6"/>
<path d="M1170 597L1232 600 1240 650Q1205 620 1170 618Z" fill="#1a1d1f"/>
<path d="M1233 597H1257L1275 700 1280 803H1270L1253 700Z" fill="#30363a"/>
<path d="M1257 570H1402L1401 628 1262 634Z" fill="url(#wood)"/>
<path d="M1257 570H1402V573H1257Z" fill="#d8c8b8"/>
<path d="M1270 576L1332 574 1335 622 1274 627Z" fill="#4a4a48"/>
<path d="M1272 579L1329 578 1331 615 1275 619Z" fill="#0c2a6e"/>
<text x="1292" y="587" style="font-size:7px;fill:#e0a020;letter-spacing:0;font-weight:bold">MENU</text>
<path d="M1275 590H1320M1276 597H1318M1279 615H1320" stroke="#9aa8c8" stroke-width="1.300" stroke-dasharray="5 2"/>
<rect x="1276" y="619" width="55" height="4" fill="#c8d0c0"/>
<g fill="#2a2a2a" stroke="#777" stroke-width=".4"><rect x="1334" y="577" width="6" height="6"/><rect x="1334" y="591" width="7" height="5"/><rect x="1336" y="600" width="6" height="4"/><rect x="1347" y="574" width="6" height="6"/><rect x="1391" y="574" width="7" height="5"/><rect x="1346" y="591" width="16" height="5"/><rect x="1363" y="591" width="16" height="5"/><rect x="1380" y="591" width="16" height="5"/><rect x="1346" y="598" width="16" height="5"/><rect x="1363" y="598" width="16" height="5"/><rect x="1380" y="598" width="16" height="5"/><rect x="1348" y="615" width="16" height="6"/><rect x="1365" y="615" width="16" height="6"/></g>
<rect x="1352" y="574" width="36" height="7" fill="#141414"/>
<circle cx="1339" cy="616" r="4" fill="#777"/><circle cx="1394" cy="613" r="4" fill="#8a8a8a"/>
<path d="M1262 634H1402L1402 712 1275 716Z" fill="#101213"/>
<path d="M1272 684L1395 675V690L1275 696Z" fill="#1e1b1a"/>
<g fill="#33383a"><rect x="1275" y="641" width="14" height="3"/><rect x="1295" y="640" width="20" height="3"/><rect x="1290" y="647" width="14" height="3"/><rect x="1355" y="636" width="20" height="3"/><rect x="1385" y="636" width="10" height="3"/><rect x="1385" y="646" width="10" height="3"/><rect x="1275" y="653" width="10" height="3"/><rect x="1315" y="655" width="10" height="3"/><rect x="1335" y="654" width="10" height="3"/></g>
<path d="M1275 703L1402 695 1402 712 1277 720Z" fill="#2c3436"/>
<path d="M1276 711L1395 706 1402 757 1320 750 1281 749Z" fill="#4a2418"/>
<path d="M1281 749L1320 748 1402 758 1404 803H1282Z" fill="#f4f2ee"/>
<path d="M1402 590H1413L1414 803H1404Z" fill="#2f3537"/>
<rect x="1422" y="663" width="16" height="60" rx="3" fill="#1c1c1c"/><path d="M1425 665V720M1428 665V720M1431 665V720M1434 665V720" stroke="#3a3a3a"/>
<path d="M1170 767H1200Q1218 768 1222 778 1228 767 1245 767 1258 770 1260 790V803H1170Z" fill="#6e7070"/>
<path d="M1170 767H1218L1208 803H1170Z" fill="#7e8080"/>
<path d="M1321 713H1382Q1389 713 1389 720V770Q1388 781 1378 782Q1340 785 1321 775Q1313 770 1313 760V722Q1314 714 1321 713Z" fill="#8a8a8a"/>
<path d="M1322 722H1355Q1358 722 1358 726V760Q1358 766 1352 767H1328Q1320 766 1320 760V726Q1320 722 1322 722Z" fill="#0a0a0a"/>
<path d="M1335 716H1353L1355 745 1352 766H1330L1326 748Z" fill="#33383a"/>
<path d="M1336 725L1332 755M1345 722L1349 760M1340 735L1344 760" stroke="#55595c" stroke-width="1.200"/>
<path d="M1336 717Q1331 690 1333 670Q1338 657 1346 658Q1356 660 1357 672Q1356 695 1353 717Z" fill="url(#knob)"/>
<ellipse cx="1342" cy="667" rx="5" ry="3" fill="#e8c0a8"/>
<path d="M1358 720L1375 719V741L1359 742Z" fill="#55595c"/>
<rect x="1369" y="722" width="5" height="3" fill="#d84040"/><rect x="1366" y="728" width="7" height="2" fill="#ddd"/><rect x="1366" y="733" width="7" height="2" fill="#ddd"/>
<rect x="1324" y="789" width="14" height="10" rx="2" fill="#777" stroke="#111" stroke-width="1.500"/>
<rect x="1349" y="789" width="34" height="11" rx="2" fill="#8a8080" stroke="#111" stroke-width="1.500"/><circle cx="1366" cy="794.500" r="4.500" fill="#e86040"/>
</g>
</g>
<rect x="1170" y="391" width="7" height="14" rx="3" fill="#cfcfcf"/><rect x="1431" y="391" width="8" height="14" rx="3" fill="#cfcfcf"/>
<circle cx="1416" cy="400" r="14" fill="#bcbcbc"/><circle cx="1416" cy="430" r="14" fill="#bcbcbc"/>
<g fill="none" stroke="#e8e8e8" stroke-width="1.200"><circle cx="1418" cy="398" r="5.500"/><path d="M1414 402L1408 407" stroke-width="2.200"/><path d="M1415.500 398H1420.500M1418 395.500V400.500"/><path d="M1420 424V432M1417 422.500V431M1414 423V431M1423 426V433" stroke-width="2"/><path d="M1413 431Q1415 437 1420 437Q1423 436 1423 432Z" fill="#e8e8e8" stroke="none"/></g>

<!-- timeline -->
<path d="M7 778H1167V803H1H1V784Q1 778 7 778Z" fill="#303030"/>
<rect x="9" y="781" width="30" height="19" rx="4" fill="#2a2a2a"/>
<circle cx="19" cy="790.500" r="6.500" fill="#eee"/><path d="M19 790.500L24 787V794Z" fill="#2a2a2a"/><use href="#cd" x="33" y="790"/>
<rect x="46" y="781" width="131" height="19" rx="4" fill="#2a2a2a"/><rect x="116.500" y="781" width="1" height="19" fill="#444"/>
<text x="53" y="795">Playback</text><use href="#cd" x="110" y="790"/><text x="124" y="795">Keying</text><use href="#cd" x="171" y="790"/>
<text x="187" y="795">View</text><text x="228" y="795">Marker</text>
<path d="M491 784Q491 781 494 781H511V800H494Q491 800 491 797Z" fill="#545454"/><path d="M511 781H527Q530 781 530 784V797Q530 800 527 800H511Z" fill="#2a2a2a"/>
<circle cx="501" cy="790.500" r="4.500" fill="none" stroke="#aaa"/><use href="#cd" transform="translate(520 790) scale(.9)" opacity=".4"/>
<rect x="536" y="781" width="118" height="19" rx="4" fill="#545454"/>
<g fill="#eee"><path d="M542 785H544V796H542ZM551 785V796L545 790.500Z"/><path d="M557 790.500L561 786 565 790.500 561 795ZM574 786V795L567 790.500Z M566 790.500L570 786 574 790.500 570 795Z" transform="translate(0 0)"/><path d="M591 785V796L582 790.500Z"/><path d="M601 784V797L611 790.500Z"/><path d="M618 786V795L624 790.500ZM625 790.500L629 786 633 790.500 629 795Z"/><path d="M642 785V796L649 790.500ZM650 785H652V796H650Z"/></g>
<rect x="886" y="781" width="74" height="19" rx="4" fill="#545454"/><text x="915" y="795">28</text>
<rect x="966" y="781" width="194" height="19" rx="4" fill="#545454"/><path d="M966 785Q966 781 970 781H985V800H970Q966 800 966 796Z" fill="#2a2a2a"/><rect x="1074" y="781" width="1" height="19" fill="#303030"/>
<circle cx="975" cy="791.500" r="5.800" fill="none" stroke="#ddd" stroke-width="1.100"/><path d="M973 784H977M975 784V786M975 788.500V792H978M979 786.500L981 785" stroke="#ddd" fill="none"/>
<text x="1000" y="795">Start</text><text x="1053" y="795">0</text><text x="1089" y="795">End</text><text x="1126" y="795">250</text>

<!-- status -->
<use href="#ms" x="16" y="814"/><rect x="11.500" y="807" width="4" height="6" fill="#9a9a9a"/><text class="st" x="26" y="819">Select</text>
<use href="#ms" x="74" y="814"/><rect x="72.500" y="807" width="3" height="6" fill="#9a9a9a"/><text class="st" x="84" y="819">Rotate View</text>
<use href="#ms" x="163" y="814"/><rect x="164" y="807" width="4" height="6" fill="#9a9a9a"/><text class="st" x="173" y="819">Options</text>
<g fill="none" stroke="#666" stroke-width="1"><circle cx="1382" cy="815" r="6"/><ellipse cx="1382" cy="815" rx="3" ry="6"/><path d="M1376 815H1388M1377 809L1388 822"/></g>
<rect x="1398" y="808" width="1" height="14" fill="#666"/>
<text class="st" x="1403" y="819">4.4.0</text>
</svg>
</body></html>
